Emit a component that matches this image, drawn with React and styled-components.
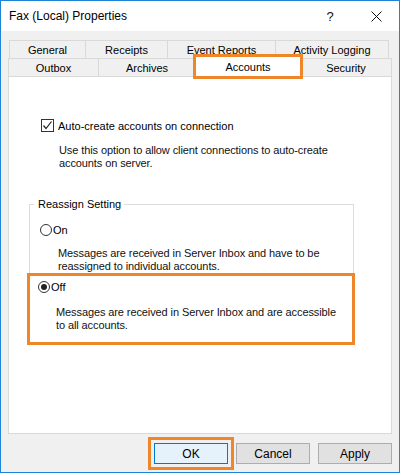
import React from 'react'
import styled, { createGlobalStyle } from 'styled-components'

const GlobalStyle = createGlobalStyle`
	html, body {
		margin: 0;
		padding: 0;
		background: #ffffff;
	}
	body {
		font-family: "Liberation Sans", Arial, sans-serif;
		font-size: 11px;
		color: #000;
	}
`

const ORANGE = '#f0862a'

const Window = styled.div`
	width: 400px;
	height: 473px;
	box-sizing: border-box;
	border: 1px solid #1c83d6;
	display: flex;
	flex-direction: column;
	background-color: #f0f0f0;
`

const TitleBar = styled.div`
	height: 30px;
	background-color: #ffffff;
	display: flex;
	align-items: center;
	padding-left: 8px;
	font-size: 12px;
`

const Title = styled.div`
	flex: 1;
`

const TitleButton = styled.div`
	width: ${props => props.width}px;
	display: flex;
	justify-content: center;
	align-items: center;
	font-size: 13px;
	color: #111;
`

const Body = styled.div`
	flex: 1;
	display: flex;
	flex-direction: column;
	padding: 9px 7px 0 7px;
`

const TabRow = styled.div`
	display: flex;
	height: 18px;
	padding-left: ${props => props.indent}px;
`

const Tab = styled.div`
	box-sizing: border-box;
	width: ${props => props.width}px;
	display: flex;
	align-items: center;
	justify-content: center;
	border: 1px solid #d9d9d9;
	border-bottom: none;
	margin-left: -1px;
	background-color: ${props => (props.active ? '#ffffff' : '#f0f0f0')};
	position: relative;
	z-index: ${props => (props.active ? 2 : 1)};
	${props => props.active && `
		height: 21px;
		margin-top: -2px;
		outline: 3px solid ${ORANGE};
		outline-offset: -1px;
	`}
`

const Panel = styled.div`
	height: 358px;
	box-sizing: border-box;
	background-color: #ffffff;
	border: 1px solid #d9d9d9;
	display: flex;
	flex-direction: column;
	padding: 42px 37px 0 20px;
`

const Section = styled.div`
	padding-left: 12px;
`

const CheckRow = styled.div`
	display: flex;
	align-items: center;
	height: 13px;
	gap: 4px;
`

const CheckBox = styled.div`
	width: 13px;
	height: 13px;
	box-sizing: border-box;
	border: 1px solid #333;
	background: #fff;
	display: flex;
	align-items: center;
	justify-content: center;
`

const Description = styled.div`
	margin: ${props => props.top}px 0 0 18px;
	line-height: 13px;
	color: #111;
	letter-spacing: -0.1px;
`

const GroupBox = styled.fieldset`
	margin: 28px 0 0 0;
	padding: 14px 0 0 0;
	border: 1px solid #dcdcdc;
	min-width: 0;
	display: flex;
	flex-direction: column;
`

const Legend = styled.legend`
	padding: 0 3px 0 4px;
	margin-left: 4px;
	line-height: 12px;
`

const Option = styled.div`
	padding: 0 0 0 10px;
	${props => props.highlight && `
		border: 3px solid ${ORANGE};
		margin: 0 -2px -2px -3px;
		padding: 5px 0 10px 8px;
	`}
`

const RadioRow = styled.div`
	display: flex;
	align-items: center;
	height: 12px;
	gap: 1px;
`

const Radio = styled.div`
	width: 12px;
	height: 12px;
	box-sizing: border-box;
	border: 1px solid #333;
	border-radius: 50%;
	background: #fff;
	display: flex;
	align-items: center;
	justify-content: center;

	&::after {
		content: '';
		display: ${props => (props.checked ? 'block' : 'none')};
		width: 6px;
		height: 6px;
		border-radius: 50%;
		background: #222;
	}
`

const ButtonBar = styled.div`
	display: flex;
	justify-content: flex-end;
	gap: 8px;
	padding: 9px 0 0 0;
`

const Button = styled.div`
	width: 74px;
	height: 21px;
	box-sizing: border-box;
	display: flex;
	align-items: center;
	justify-content: center;
	background-color: ${props => (props.primary ? '#e5f1fb' : '#e1e1e1')};
	border: 1px solid ${props => (props.primary ? '#0078d7' : '#adadad')};
	font-size: 12px;
	${props => props.highlight && `
		outline: 3px solid ${ORANGE};
		outline-offset: 3px;
	`}
`

const topTabs = [
	{ label: 'General', width: 77 },
	{ label: 'Receipts', width: 83 },
	{ label: 'Event Reports', width: 109 },
	{ label: 'Activity Logging', width: 114 },
]

const bottomTabs = [
	{ label: 'Outbox', width: 91 },
	{ label: 'Archives', width: 98 },
	{ label: 'Accounts', width: 106, active: true },
	{ label: 'Security', width: 92 },
]

const CloseIcon = () => (
	<svg width="11" height="11" viewBox="0 0 11 11">
		<path d="M0.5 0.5 L10.5 10.5 M10.5 0.5 L0.5 10.5" stroke="#111" strokeWidth="1" fill="none" />
	</svg>
)

const CheckMark = () => (
	<svg width="11" height="11" viewBox="0 0 11 11">
		<path d="M1.5 5.5 L4 8.5 L9.5 1.5" stroke="#222" strokeWidth="1.2" fill="none" />
	</svg>
)

const App = () => {
	return (
		<>
			<GlobalStyle />
			<Window>
				<TitleBar>
					<Title>Fax (Local) Properties</Title>
					<TitleButton width={46}>?</TitleButton>
					<TitleButton width={46}><CloseIcon /></TitleButton>
				</TitleBar>
				<Body>
					<TabRow indent={2}>
						{topTabs.map(t => <Tab key={t.label} width={t.width}>{t.label}</Tab>)}
					</TabRow>
					<TabRow indent={1}>
						{bottomTabs.map(t => <Tab key={t.label} width={t.width} active={t.active}>{t.label}</Tab>)}
					</TabRow>
					<Panel>
						<Section>
							<CheckRow>
								<CheckBox><CheckMark /></CheckBox>
								Auto-create accounts on connection
							</CheckRow>
							<Description top={12}>
								Use this option to allow client connections to auto-create<br />
								accounts on server.
							</Description>
						</Section>
						<GroupBox>
							<Legend>Reassign Setting</Legend>
							<Option>
								<RadioRow><Radio />On</RadioRow>
								<Description top={11}>
									Messages are received in Server Inbox and have to be<br />
									reassigned to individual accounts.
								</Description>
							</Option>
							<Option highlight>
								<RadioRow><Radio checked />Off</RadioRow>
								<Description top={13}>
									Messages are received in Server Inbox and are accessible<br />
									to all accounts.
								</Description>
							</Option>
						</GroupBox>
					</Panel>
					<ButtonBar>
						<Button primary highlight>OK</Button>
						<Button>Cancel</Button>
						<Button>Apply</Button>
					</ButtonBar>
				</Body>
			</Window>
		</>
	)
}

export default App
